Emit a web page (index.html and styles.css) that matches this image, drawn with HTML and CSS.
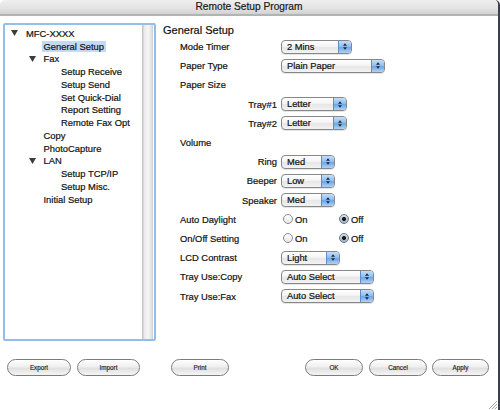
FILE: index.html
```html
<!DOCTYPE html>
<html>
<head>
<meta charset="utf-8">
<title>Remote Setup Program</title>
<link rel="stylesheet" href="styles.css">
</head>
<body>
<div class="window">
  <div class="titlebar">Remote Setup Program</div>
  <div class="main">
    <div class="tree">
      <ul class="tree-list">
        <li class="node l0"><svg class="tri" viewBox="0 0 7 6"><polygon points="0,0 7,0 3.5,6"/></svg>MFC-XXXX</li>
        <li class="node l1"><span class="sel">General Setup</span></li>
        <li class="node l1"><svg class="tri" viewBox="0 0 7 6"><polygon points="0,0 7,0 3.5,6"/></svg>Fax</li>
        <li class="node l2">Setup Receive</li>
        <li class="node l2">Setup Send</li>
        <li class="node l2">Set Quick-Dial</li>
        <li class="node l2">Report Setting</li>
        <li class="node l2">Remote Fax Opt</li>
        <li class="node l1">Copy</li>
        <li class="node l1">PhotoCapture</li>
        <li class="node l1"><svg class="tri" viewBox="0 0 7 6"><polygon points="0,0 7,0 3.5,6"/></svg>LAN</li>
        <li class="node l2">Setup TCP/IP</li>
        <li class="node l2">Setup Misc.</li>
        <li class="node l1">Initial Setup</li>
      </ul>
      <div class="scrollbar"></div>
    </div>
    <div class="content">
      <h1 class="heading">General Setup</h1>
      <div class="row">
        <span class="label">Mode Timer</span>
        <div class="popup w-timer"><span class="val">2 Mins</span><span class="stepper"><svg viewBox="0 0 5 8"><polygon points="2.5,0 5,3 0,3"/><polygon points="0,5 5,5 2.5,8"/></svg></span></div>
      </div>
      <div class="row">
        <span class="label">Paper Type</span>
        <div class="popup w-type"><span class="val">Plain Paper</span><span class="stepper"><svg viewBox="0 0 5 8"><polygon points="2.5,0 5,3 0,3"/><polygon points="0,5 5,5 2.5,8"/></svg></span></div>
      </div>
      <div class="row">
        <span class="label">Paper Size</span>
      </div>
      <div class="row sub">
        <span class="label">Tray#1</span>
        <div class="popup w-tray"><span class="val">Letter</span><span class="stepper"><svg viewBox="0 0 5 8"><polygon points="2.5,0 5,3 0,3"/><polygon points="0,5 5,5 2.5,8"/></svg></span></div>
      </div>
      <div class="row sub">
        <span class="label">Tray#2</span>
        <div class="popup w-tray"><span class="val">Letter</span><span class="stepper"><svg viewBox="0 0 5 8"><polygon points="2.5,0 5,3 0,3"/><polygon points="0,5 5,5 2.5,8"/></svg></span></div>
      </div>
      <div class="row">
        <span class="label">Volume</span>
      </div>
      <div class="row sub">
        <span class="label">Ring</span>
        <div class="popup w-vol"><span class="val">Med</span><span class="stepper"><svg viewBox="0 0 5 8"><polygon points="2.5,0 5,3 0,3"/><polygon points="0,5 5,5 2.5,8"/></svg></span></div>
      </div>
      <div class="row sub">
        <span class="label">Beeper</span>
        <div class="popup w-vol"><span class="val">Low</span><span class="stepper"><svg viewBox="0 0 5 8"><polygon points="2.5,0 5,3 0,3"/><polygon points="0,5 5,5 2.5,8"/></svg></span></div>
      </div>
      <div class="row sub">
        <span class="label">Speaker</span>
        <div class="popup w-vol"><span class="val">Med</span><span class="stepper"><svg viewBox="0 0 5 8"><polygon points="2.5,0 5,3 0,3"/><polygon points="0,5 5,5 2.5,8"/></svg></span></div>
      </div>
      <div class="row">
        <span class="label">Auto Daylight</span>
        <div class="radios">
          <span class="radio"><span class="circle"></span>On</span>
          <span class="radio"><span class="circle checked"></span>Off</span>
        </div>
      </div>
      <div class="row">
        <span class="label">On/Off Setting</span>
        <div class="radios">
          <span class="radio"><span class="circle"></span>On</span>
          <span class="radio"><span class="circle checked"></span>Off</span>
        </div>
      </div>
      <div class="row">
        <span class="label">LCD Contrast</span>
        <div class="popup w-lcd"><span class="val">Light</span><span class="stepper"><svg viewBox="0 0 5 8"><polygon points="2.5,0 5,3 0,3"/><polygon points="0,5 5,5 2.5,8"/></svg></span></div>
      </div>
      <div class="row">
        <span class="label">Tray Use:Copy</span>
        <div class="popup w-use"><span class="val">Auto Select</span><span class="stepper"><svg viewBox="0 0 5 8"><polygon points="2.5,0 5,3 0,3"/><polygon points="0,5 5,5 2.5,8"/></svg></span></div>
      </div>
      <div class="row">
        <span class="label">Tray Use:Fax</span>
        <div class="popup w-use"><span class="val">Auto Select</span><span class="stepper"><svg viewBox="0 0 5 8"><polygon points="2.5,0 5,3 0,3"/><polygon points="0,5 5,5 2.5,8"/></svg></span></div>
      </div>
    </div>
  </div>
  <div class="buttons">
    <button class="btn b-export">Export</button>
    <button class="btn b-import">Import</button>
    <button class="btn b-print">Print</button>
    <button class="btn b-ok">OK</button>
    <button class="btn b-cancel">Cancel</button>
    <button class="btn b-apply">Apply</button>
  </div>
  <svg class="grip" viewBox="0 0 9 9"><line x1="1" y1="9" x2="9" y2="1"/><line x1="4" y1="9" x2="9" y2="4"/><line x1="7" y1="9" x2="9" y2="7"/></svg>
</div>
</body>
</html>
```

FILE: styles.css
```css
html, body {
  margin: 0;
  padding: 0;
}
body {
  width: 500px;
  height: 410px;
  background: #ffffff;
  overflow: hidden;
  font-family: "Liberation Sans", Arial, sans-serif;
  color: #111;
  -webkit-text-stroke: 0.2px #111;
}
.window {
  position: relative;
  box-sizing: border-box;
  width: 500px;
  height: 410px;
  background: #fff;
  border-right: 2px solid #3a3f52;
  border-top-left-radius: 5px;
  border-top-right-radius: 5px;
  display: flex;
  flex-direction: column;
}
.titlebar {
  box-sizing: border-box;
  height: 16px;
  line-height: 14px;
  text-align: center;
  font-size: 10.2px;
  color: #222;
  background: linear-gradient(#efefef, #e2e2e2 60%, #d2d2d2);
  border-bottom: 2px solid #b3b3b3;
  border-top-left-radius: 5px;
  border-top-right-radius: 5px;
}
.main {
  display: flex;
  padding: 7px 0 0 3px;
  height: 325px;
  box-sizing: border-box;
}
.tree {
  box-sizing: border-box;
  width: 153px;
  height: 318px;
  border: 2px solid #95bde9;
  border-radius: 2px;
  display: flex;
  background: #fff;
}
.tree-list {
  list-style: none;
  margin: 0;
  padding: 2px 0 0 0;
  flex: 1;
  font-size: 9.4px;
}
.node {
  display: flex;
  align-items: center;
  height: 12.75px;
  white-space: nowrap;
}
.node.l0 { padding-left: 21px; }
.node.l1 { padding-left: 38.5px; }
.node.l2 { padding-left: 56px; }
.tri {
  width: 7px;
  height: 6px;
  margin-left: -15px;
  margin-right: 8px;
  fill: #3c3c3c;
}
.sel {
  background: #c3daf4;
  padding: 0 2px;
  margin-left: -2px;
  line-height: 11px;
}
.scrollbar {
  width: 11px;
  margin-right: 1px;
  background: linear-gradient(to right, #b9b9b9, #e9e9e9 20%, #f7f7f7 55%, #e2e2e2 85%, #cfcfcf);
}
.content {
  margin-left: 7px;
  flex: 1;
}
.heading {
  margin: 0;
  height: 14px;
  line-height: 14px;
  font-size: 11px;
  font-weight: normal;
  color: #111;
}
.row {
  display: grid;
  grid-template-columns: 97px auto;
  column-gap: 4px;
  align-items: center;
  height: 19.2px;
  padding-left: 17px;
  font-size: 9.4px;
}
.row.sub .label {
  text-align: right;
}
.label {
  white-space: nowrap;
}
.popup {
  box-sizing: border-box;
  height: 14px;
  border: 1px solid #878787;
  border-radius: 4px;
  display: flex;
  background: linear-gradient(#ffffff, #f4f4f4 45%, #e6e6e6 55%, #f3f3f3);
  box-shadow: 0 1px 0 rgba(0,0,0,0.1);
}
.w-timer { width: 71px; }
.w-type { width: 104px; }
.w-tray { width: 66px; }
.w-vol { width: 54px; }
.w-lcd { width: 59px; }
.w-use { width: 93px; }
.val {
  flex: 1;
  padding-left: 5px;
  line-height: 12px;
  font-size: 9.3px;
  white-space: nowrap;
}
.stepper {
  width: 12px;
  border-left: 1px solid #5f8cc4;
  border-radius: 0 3px 3px 0;
  background: linear-gradient(#c4ddf8, #94bfee 45%, #6ea6e6 55%, #aed2f6);
  display: flex;
  align-items: center;
  justify-content: center;
}
.stepper svg {
  width: 4px;
  height: 7px;
  fill: #1d2a3a;
}
.radios {
  display: flex;
  padding-left: 2px;
}
.radio {
  display: inline-flex;
  align-items: center;
  gap: 2px;
  width: 56px;
}
.circle {
  box-sizing: border-box;
  width: 10px;
  height: 10px;
  border-radius: 50%;
  border: 1px solid #8c8c8c;
  background: linear-gradient(#ffffff, #e6e6e6);
}
.circle.checked {
  border-color: #6d7a8a;
  background: radial-gradient(circle, #1a1a1a 0, #1a1a1a 1.7px, transparent 2.3px), linear-gradient(#d8e0ea, #9eb0c4);
}
.buttons {
  display: flex;
  margin-top: 18px;
  padding-left: 7px;
}
.btn {
  box-sizing: border-box;
  height: 17px;
  padding: 0;
  margin: 0;
  border: 1px solid #7b7b7b;
  border-radius: 9px;
  background: linear-gradient(#fefefe, #efefef 45%, #e0e0e0 55%, #f5f5f5);
  font-family: "Liberation Sans", Arial, sans-serif;
  font-size: 6.3px;
  color: #222;
  -webkit-text-stroke: 0.15px #222;
  box-shadow: inset 0 1px 1px rgba(255,255,255,0.9);
}
.b-export { width: 64px; }
.b-import { width: 63px; margin-left: 6px; }
.b-print { width: 58px; margin-left: 31px; }
.b-ok { width: 58px; margin-left: 76px; }
.b-cancel { width: 58px; margin-left: 6px; }
.b-apply { width: 57px; margin-left: 5px; }
.grip {
  position: absolute;
  right: 1px;
  bottom: 1px;
  width: 9px;
  height: 9px;
  stroke: #8a8a8a;
  stroke-width: 0.8;
}
```
